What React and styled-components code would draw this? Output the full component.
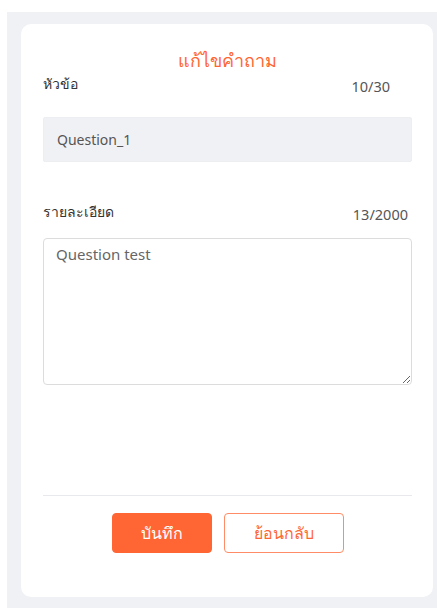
import React from 'react';
import styled, { createGlobalStyle } from 'styled-components';

const GlobalStyle = createGlobalStyle`
    html, body {
        margin: 0;
        padding: 0;
        background: #ffffff;
    }

    body {
        font-family: 'Noto Sans', 'Liberation Sans', sans-serif;
        color: #333333;
    }
`;

const App = () => {
    return (
        <>
            <GlobalStyle />
            <Page>
                <Card>
                    <Title>แก้ไขคำถาม</Title>

                    <FieldHead pr='22px'>
                        <Label>หัวข้อ</Label>
                        <Counter>10/30</Counter>
                    </FieldHead>
                    <TextInput value='Question_1' readOnly />

                    <FieldHead pr='4px' top='38px'>
                        <Label>รายละเอียด</Label>
                        <Counter>13/2000</Counter>
                    </FieldHead>
                    <TextArea value='Question test' readOnly />

                    <Footer>
                        <Button type='button' variant='primary'>
                            บันทึก
                        </Button>
                        <Button type='button'>ย้อนกลับ</Button>
                    </Footer>
                </Card>
            </Page>
        </>
    );
};

export default App;

const Page = styled.div`
    margin: 12px 0 0 7px;
    padding: 12px 4px 11px 14px;
    height: 608px;
    box-sizing: border-box;
    background: #f0f1f5;
`;

const Card = styled.div`
    display: flex;
    flex-direction: column;
    box-sizing: border-box;
    height: 573px;
    padding: 24px 21px 0 22px;
    border-radius: 10px;
    background: #ffffff;
`;

const Title = styled.h2`
    margin: 0;
    text-align: center;
    font-size: 18px;
    font-weight: 400;
    line-height: 24px;
    color: #ff6633;
`;

const FieldHead = styled.div`
    display: flex;
    justify-content: space-between;
    align-items: center;

    margin-top: ${props => (props.top ? props.top : '0px')};
    padding-right: ${props => props.pr};
    height: 24px;
`;

const Label = styled.span`
    font-size: 14px;
    font-weight: 400;
    color: #333333;
`;

const Counter = styled.span`
    margin-top: 4px;
    font-size: 14.5px;
    color: #555555;
`;

const TextInput = styled.input`
    box-sizing: border-box;
    width: 100%;
    height: 45px;
    margin-top: 21px;
    padding: 0 13px;
    border: 1px solid #eceef2;
    border-radius: 2px;
    background: #f0f1f4;
    font-family: inherit;
    font-size: 14px;
    color: #555555;
    outline: none;
`;

const TextArea = styled.textarea`
    box-sizing: border-box;
    width: 100%;
    height: 147px;
    margin-top: 14px;
    padding: 5px 12px;
    border: 1px solid #dcdcdc;
    border-radius: 4px;
    font-family: inherit;
    font-size: 15px;
    line-height: 20px;
    color: #666666;
    outline: none;
`;

const Footer = styled.div`
    display: flex;
    justify-content: center;
    gap: 12px;

    margin-top: 110px;
    padding-top: 17px;
    border-top: 1px solid #e8e9ec;
`;

const Button = styled.button`
    box-sizing: border-box;
    height: 40px;
    width: ${props => (props.variant === 'primary' ? '100px' : '120px')};
    border: 1px solid ${props => (props.variant === 'primary' ? '#ff6633' : '#ff8c66')};
    border-radius: 4px;
    background: ${props => (props.variant === 'primary' ? '#ff6633' : '#ffffff')};
    font-family: inherit;
    font-size: 16px;
    font-weight: 500;
    color: ${props => (props.variant === 'primary' ? '#ffffff' : '#ff6633')};
    cursor: pointer;
`;
